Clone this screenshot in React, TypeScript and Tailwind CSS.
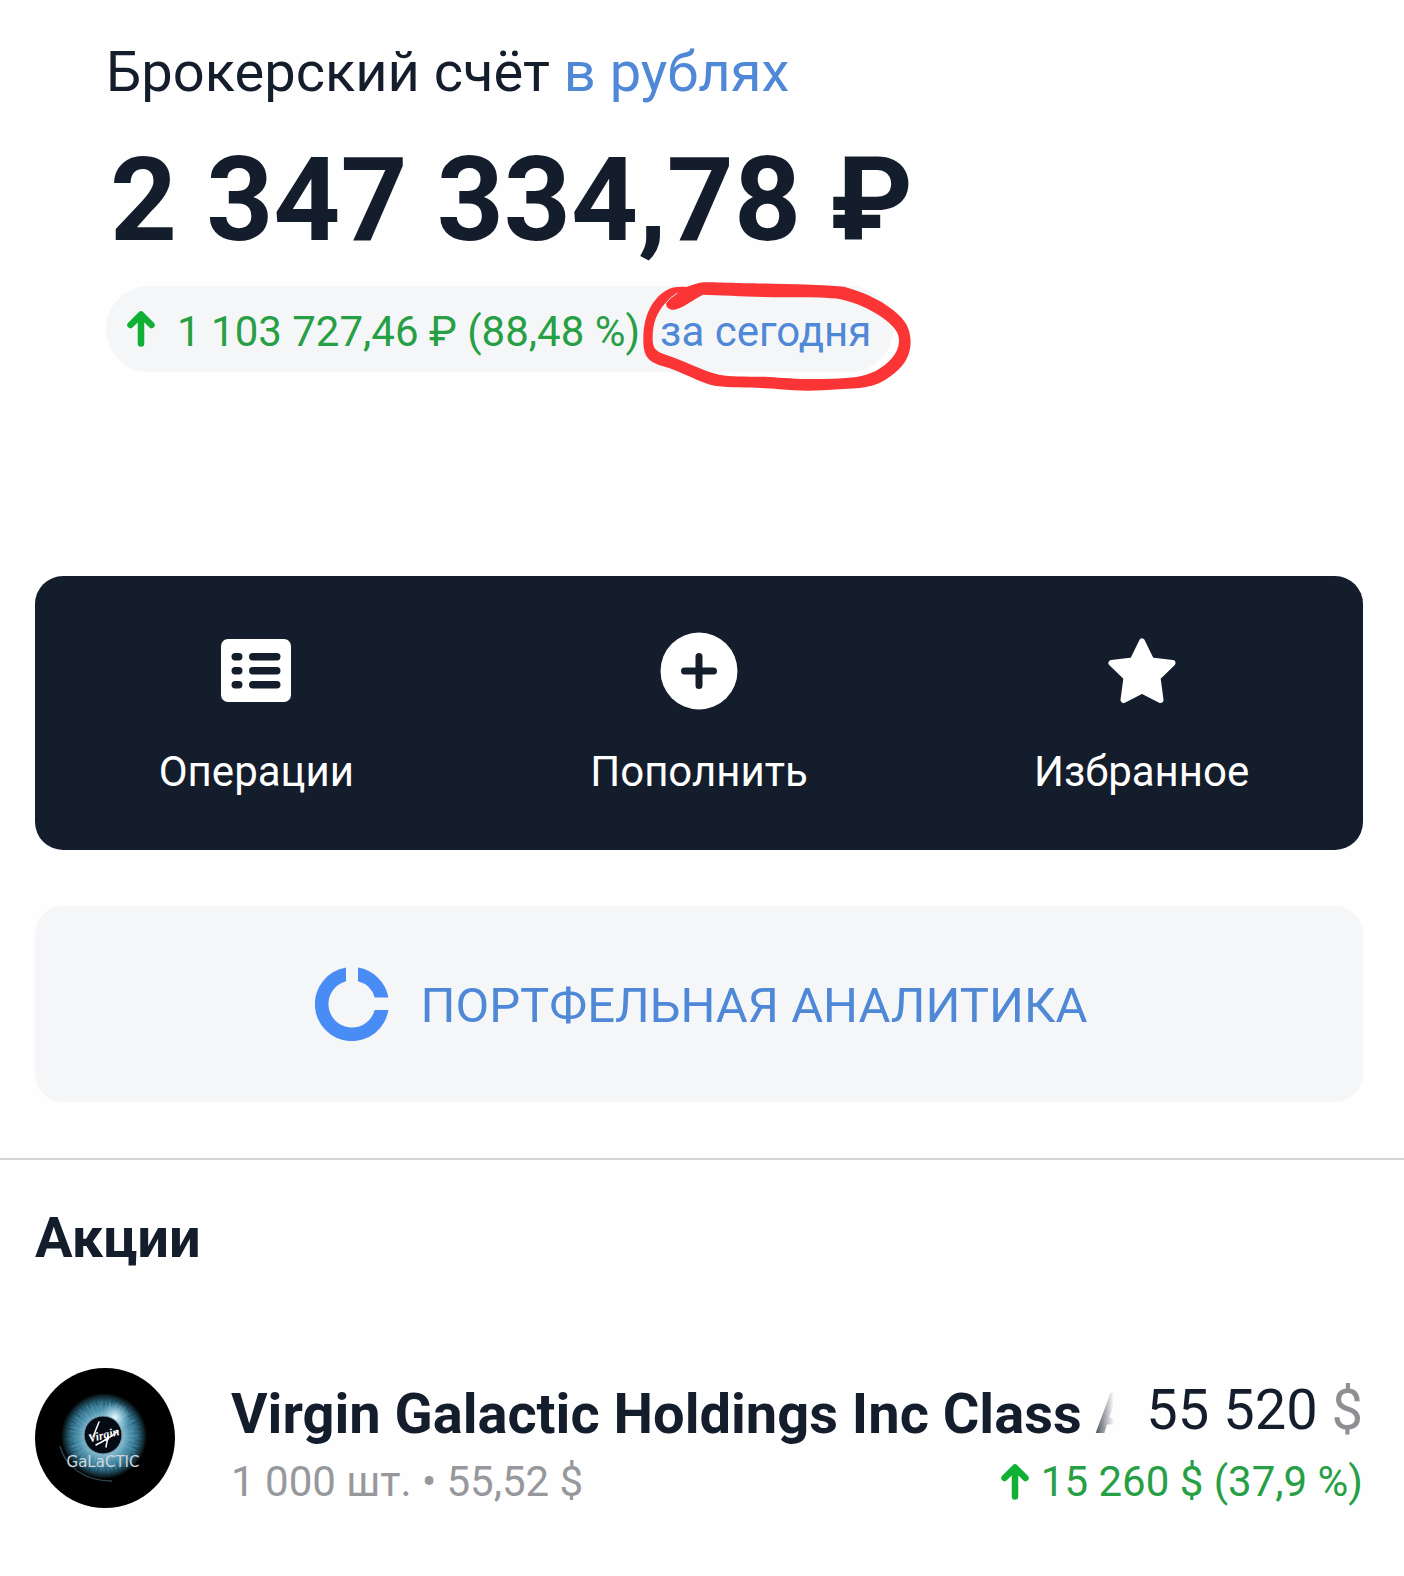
import { ReactNode } from "react";
import clsx from "clsx";

function ArrowUp() {
  return (
    <svg className="w-7 h-9 shrink-0" viewBox="0 0 28 36" fill="none" aria-hidden="true">
      <path
        d="M14 32.500V6M3.500 14 14 3.500l10.500 10.500"
        stroke="#0fb034"
        strokeWidth="6.500"
        strokeLinecap="round"
        strokeLinejoin="round"
      />
    </svg>
  );
}

function ListIcon() {
  return (
    <svg className="size-[78px]" viewBox="0 0 78 78" aria-hidden="true">
      <rect x="4" y="7" width="70" height="63" rx="7" fill="#fff" />
      <g fill="#141d2b">
        <rect x="14.500" y="21" width="11" height="7.500" rx="3.700" />
        <rect x="32" y="21" width="31.500" height="7.500" rx="3.700" />
        <rect x="14.500" y="35" width="11" height="7.500" rx="3.700" />
        <rect x="32" y="35" width="31.500" height="7.500" rx="3.700" />
        <rect x="14.500" y="49" width="11" height="7.500" rx="3.700" />
        <rect x="32" y="49" width="31.500" height="7.500" rx="3.700" />
      </g>
    </svg>
  );
}

function PlusIcon() {
  return (
    <svg className="size-[78px]" viewBox="0 0 78 78" aria-hidden="true">
      <circle cx="39" cy="39" r="38.500" fill="#fff" />
      <path d="M39 24.500v29M24.500 39h29" stroke="#141d2b" strokeWidth="7" strokeLinecap="round" />
    </svg>
  );
}

function StarIcon() {
  return (
    <svg className="size-[78px]" viewBox="0 0 78 78" aria-hidden="true">
      <path
        d="M39 9.500 48.300 28.500 69.500 31 54.500 45.500 57.500 68 39 58.500 20.500 68 23.500 45.500 8.500 31 29.700 28.500Z"
        fill="#fff"
        stroke="#fff"
        strokeWidth="6"
        strokeLinejoin="round"
      />
    </svg>
  );
}

function DonutIcon() {
  return (
    <svg className="size-[74px] shrink-0" viewBox="0 0 74 74" aria-hidden="true">
      <path
        d="M31 .6A37 37 0 1 0 73.400 43H59.700A23.500 23.500 0 1 1 31 14.300Z"
        fill="#4a8cf5"
      />
      <path d="M43 .6A37 37 0 0 1 73.400 30.500H59.700A23.500 23.500 0 0 0 43 14.300Z" fill="#4a8cf5" />
    </svg>
  );
}

function VirginLogo() {
  return (
    <svg className="size-[140px] shrink-0" viewBox="0 0 140 140" role="img" aria-label="Virgin Galactic">
      <defs>
        <radialGradient id="iris">
          <stop offset="0.450" stopColor="#7fb4ca" />
          <stop offset="0.600" stopColor="#4b90ab" />
          <stop offset="0.800" stopColor="#2d6a82" />
          <stop offset="1" stopColor="#000" />
        </radialGradient>
        <radialGradient id="glow">
          <stop offset="0" stopColor="#e6f7ff" />
          <stop offset="1" stopColor="#9fd4ea" stopOpacity="0" />
        </radialGradient>
      </defs>
      <circle cx="70" cy="70" r="70" fill="#000" />
      <circle cx="69" cy="68" r="43" fill="url(#iris)" />
      <circle cx="69" cy="68" r="27" fill="none" stroke="#a5d5e6" strokeOpacity="0.150" strokeWidth="14" strokeDasharray="1 2 2 3" />
      <circle cx="69" cy="68" r="35" fill="none" stroke="#0c2c3a" strokeOpacity="0.300" strokeWidth="8" strokeDasharray="1 3 2 2" />
      <circle cx="80" cy="49" r="15" fill="url(#glow)" />
      <circle cx="68" cy="67" r="19" fill="#050b14" stroke="#7aa5b5" strokeWidth="1" />
      <path d="M25 78c5 20 24 35 52 35" fill="none" stroke="#2c434d" strokeWidth="1.500" />
      <text
        x="69"
        y="71"
        textAnchor="middle"
        transform="rotate(-14 68 68)"
        fill="#fff"
        className="font-['Liberation_Serif',serif] text-[12px] italic font-bold"
      >
        Virgin
      </text>
      <path
        d="M58 69 64 54M73 68 71 79M61 77C68 73 74 71 83 63"
        fill="none"
        stroke="#fff"
        strokeWidth="1.500"
        strokeLinecap="round"
      />
      <text
        x="68"
        y="99"
        textAnchor="middle"
        fill="#cdd8dc"
        className="font-['DejaVu_Sans',sans-serif] text-[15px]"
      >
        GaLaCTIC
      </text>
    </svg>
  );
}

// hand-drawn marker around the period
function MarkerCircle() {
  return (
    <svg
      className="absolute -top-1.5 -right-5 w-[274px] h-[112px] pointer-events-none"
      viewBox="300 30 822 336"
      aria-hidden="true"
    >
      <path
        fillRule="evenodd"
        fill="#fb3536"
        d="M482 38C520 35 560 40 700 41C800 42 870 46 915 50C960 62 1020 85 1062 120C1100 150 1114 175 1115 215C1114 260 1095 290 1050 322C1010 350 980 355 900 358C840 363 780 364 720 358C640 350 590 355 530 348C480 338 430 305 370 288C325 275 314 255 313 215C312 165 322 120 352 86C375 60 400 46 442 51Q460 44 482 38Z
        M492 74C560 75 640 82 740 82C820 83 870 82 905 88C950 98 1000 120 1040 150C1070 175 1081 190 1080 215C1078 250 1050 280 1010 303C970 322 940 324 880 326C800 330 740 324 690 321C620 318 580 322 540 314C490 302 430 270 380 254C350 244 342 235 341 210C340 165 350 130 382 96C378 112 392 124 412 118C440 108 465 88 492 74Z"
      />
      <path d="M380 100Q392 82 414 70" fill="none" stroke="#f6dfe2" strokeWidth="3" strokeLinecap="round" />
    </svg>
  );
}

interface IAction {
  icon: ReactNode;
  label: string;
}

const actions: IAction[] = [
  { icon: <ListIcon />, label: "Операции" },
  { icon: <PlusIcon />, label: "Пополнить" },
  { icon: <StarIcon />, label: "Избранное" },
];

function Balance() {
  return (
    <header className="flex flex-col items-start px-[106px] pt-10">
      <h1 className="text-[56px] leading-[64px]">
        Брокерский счёт{" "}
        <a href="#currency" className="text-[#4f88d6]">
          в рублях
        </a>
      </h1>
      <p className="mt-7 pl-1 text-[117px] leading-[136px] font-bold whitespace-nowrap">2 347 334,78 ₽</p>
      <div className="relative mt-[18px] flex items-center h-[86px] pl-[21px] pr-[22px] rounded-full bg-[#f5f6f8] text-[42px] leading-[56px] whitespace-nowrap">
        <ArrowUp />
        <span className="pt-1.5 ml-[22px] text-[#279f45]">1 103 727,46 ₽ (88,48 %)</span>
        <a href="#period" className="pt-1.5 ml-5 text-[#4f88d6]">
          за сегодня
        </a>
        <MarkerCircle />
      </div>
    </header>
  );
}

function Actions() {
  return (
    <nav className="grid grid-cols-3 mt-[204px] rounded-[28px] bg-[#141d2b] text-white">
      {actions.map(({ icon, label }) => (
        <button
          key={label}
          type="button"
          className="flex flex-col items-center gap-[34px] pt-14 pb-[50px] text-[42px] leading-[56px] cursor-pointer"
        >
          {icon}
          {label}
        </button>
      ))}
    </nav>
  );
}

function Holding({ up }: { up: boolean }) {
  return (
    <article className="flex items-start gap-14 mt-[98px]">
      <VirginLogo />
      <div className="flex-1 min-w-0 pt-[10px] whitespace-nowrap">
        <div className="flex items-start gap-8">
          <h3 className="flex-1 min-w-0 pt-1 text-[56px] leading-[64px] font-bold overflow-hidden mask-r-from-[calc(100%-24px)]">
            Virgin Galactic Holdings Inc Class A
          </h3>
          <p className="text-[56px] leading-[64px]">
            55 520 <span className="text-[#8e8f92]">$</span>
          </p>
        </div>
        <div className="flex justify-between mt-2 text-[42px] leading-[56px]">
          <p className="text-[#97989c]">1 000 шт. • 55,52 $</p>
          <p
            className={clsx("flex items-center gap-3", {
              ["text-[#279f45]"]: up,
              ["text-red-600"]: !up,
            })}
          >
            <ArrowUp />
            15 260 $ (37,9 %)
          </p>
        </div>
      </div>
    </article>
  );
}

export default function App() {
  return (
    <main className="min-h-screen bg-[#fefefe] pb-16 font-[Roboto,'Liberation_Sans',sans-serif] text-[#141d2b]">
      <Balance />
      <div className="pl-[35px] pr-[41px]">
        <Actions />
        <button
          type="button"
          className="flex items-center justify-center gap-8 w-full h-[196px] mt-14 pl-1 rounded-[28px] bg-[#f4f6f8] text-[49px] leading-[64px] text-[#4f88d6] cursor-pointer"
        >
          <DonutIcon />
          <span className="pt-1">ПОРТФЕЛЬНАЯ АНАЛИТИКА</span>
        </button>
      </div>
      <section className="mt-14 pt-[46px] pl-[35px] pr-[41px] border-t-2 border-[#d3d5d7]">
        <h2 className="text-[56px] leading-[64px] font-bold">Акции</h2>
        <Holding up />
      </section>
    </main>
  );
}
